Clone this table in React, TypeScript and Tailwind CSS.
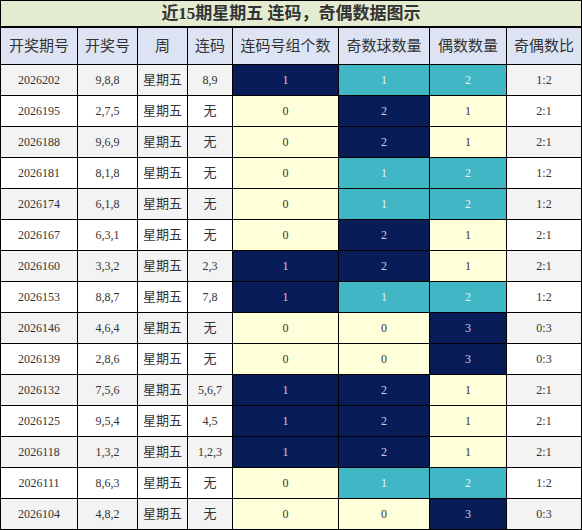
const rows: [string, string, string, number, number, number][] = [
  ["2026202", "9,8,8", "8,9", 1, 1, 2],
  ["2026195", "2,7,5", "无", 0, 2, 1],
  ["2026188", "9,6,9", "无", 0, 2, 1],
  ["2026181", "8,1,8", "无", 0, 1, 2],
  ["2026174", "6,1,8", "无", 0, 1, 2],
  ["2026167", "6,3,1", "无", 0, 2, 1],
  ["2026160", "3,3,2", "2,3", 1, 2, 1],
  ["2026153", "8,8,7", "7,8", 1, 1, 2],
  ["2026146", "4,6,4", "无", 0, 0, 3],
  ["2026139", "2,8,6", "无", 0, 0, 3],
  ["2026132", "7,5,6", "5,6,7", 1, 2, 1],
  ["2026125", "9,5,4", "4,5", 1, 2, 1],
  ["2026118", "1,3,2", "1,2,3", 1, 2, 1],
  ["2026111", "8,6,3", "无", 0, 1, 2],
  ["2026104", "4,8,2", "无", 0, 0, 3],
];

const headers = ["开奖期号", "开奖号", "周", "连码", "连码号组个数", "奇数球数量", "偶数数量", "奇偶数比"];

const NAVY = "bg-[#081d58] text-[#c9cde2]";
const TEAL = "bg-[#41b6c4] text-[#e4f3f5]";
const YELLOW = "bg-[#ffffd9] text-[#333]";

function lianColor(n: number) {
  return n >= 1 ? NAVY : YELLOW;
}
function oddColor(n: number) {
  if (n >= 2) return NAVY;
  if (n === 1) return TEAL;
  return YELLOW;
}
function evenColor(n: number) {
  if (n >= 3) return NAVY;
  if (n === 2) return TEAL;
  return YELLOW;
}

export default function App() {
  return (
    <div className="w-[582px] h-[530px] bg-white font-['Liberation_Serif','Noto_Sans_CJK_SC',serif] text-[#333]">
      <div className="border border-black bg-black flex flex-col">
        <div className="h-[25px] bg-[#e3ebd0] flex items-center justify-center text-[17px] font-bold text-[#333] leading-none">
          近15期星期五 连码，奇偶数据图示
        </div>
        <div className="h-[2px]" />
        <div className="grid grid-cols-[76px_59px_49px_44px_105px_90px_76px_74px] gap-px">
          {headers.map((h) => (
            <div key={h} className="h-[36px] bg-[#dde3f2] flex items-center justify-center text-[15px] text-[#333]">
              {h}
            </div>
          ))}
          {rows.map((r, i) => {
            const base = i % 2 === 0 ? "bg-[#f3f3f3]" : "bg-white";
            const cell = "h-[30px] flex items-center justify-center text-[12px]";
            return [
              <div key={r[0] + "a"} className={`${cell} ${base}`}>{r[0]}</div>,
              <div key={r[0] + "b"} className={`${cell} ${base}`}>{r[1]}</div>,
              <div key={r[0] + "c"} className={`${cell} ${base} text-[13px]`}>星期五</div>,
              <div key={r[0] + "d"} className={`${cell} ${base} ${r[2] === "无" ? "text-[13px]" : ""}`}>{r[2]}</div>,
              <div key={r[0] + "e"} className={`${cell} ${lianColor(r[3])}`}>{r[3]}</div>,
              <div key={r[0] + "f"} className={`${cell} ${oddColor(r[4])}`}>{r[4]}</div>,
              <div key={r[0] + "g"} className={`${cell} ${evenColor(r[5])}`}>{r[5]}</div>,
              <div key={r[0] + "h"} className={`${cell} ${base}`}>{r[4]}:{r[5]}</div>,
            ];
          })}
        </div>
      </div>
    </div>
  );
}
